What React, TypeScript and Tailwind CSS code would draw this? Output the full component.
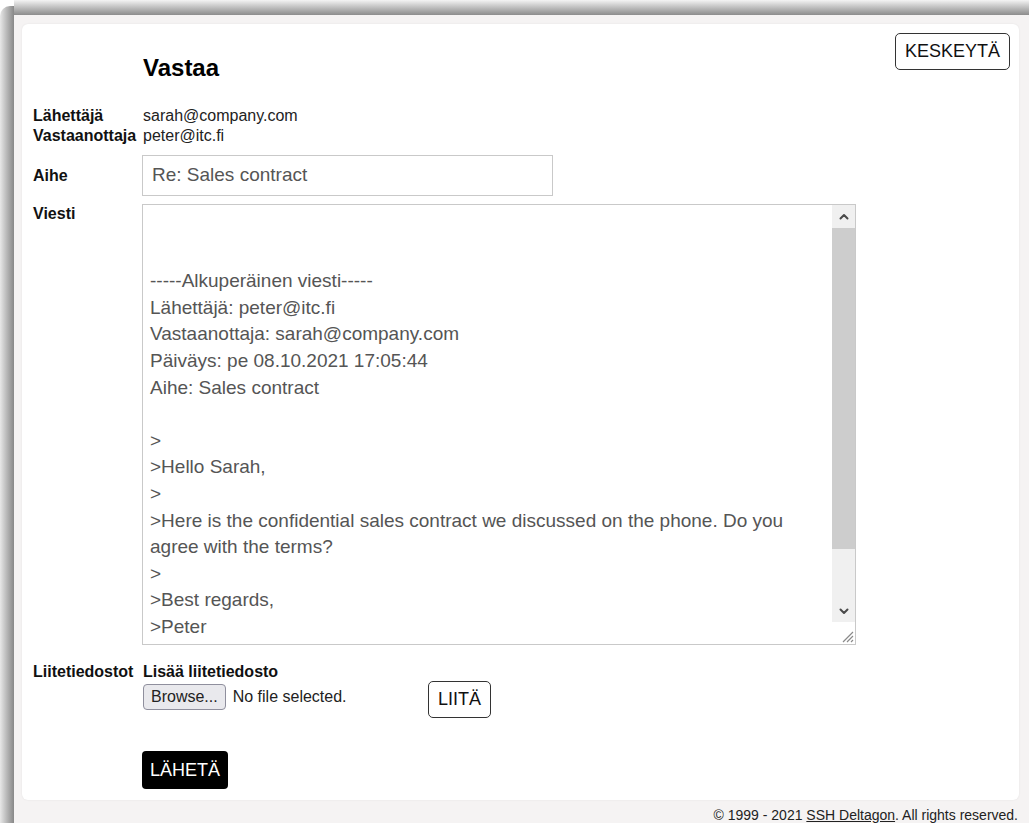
import type { ReactNode } from "react";

// Quoted original message shown in the reply body
const bodyLines = [
  "",
  "",
  "-----Alkuperäinen viesti-----",
  "Lähettäjä: peter@itc.fi",
  "Vastaanottaja: sarah@company.com",
  "Päiväys: pe 08.10.2021 17:05:44",
  "Aihe: Sales contract",
  "",
  ">",
  ">Hello Sarah,",
  ">",
  ">Here is the confidential sales contract we discussed on the phone. Do you",
  "agree with the terms?",
  ">",
  ">Best regards,",
  ">Peter",
];

const Label = ({ children }: { children: ReactNode }) => (
  <div className="w-[110px] shrink-0 text-[16px] leading-[19px] font-bold text-[#111]">{children}</div>
);

const Chevron = ({ up }: { up?: boolean }) => (
  <svg width="10" height="7" viewBox="0 0 10 7" fill="none">
    <path
      d={up ? "M1.5 5.5 L5 2 L8.5 5.5" : "M1.5 1.5 L5 5 L8.5 1.5"}
      stroke="#4a4a4a"
      strokeWidth="2"
      strokeLinecap="round"
      strokeLinejoin="round"
    />
  </svg>
);

// Textarea look-alike with its scrollbar scrolled to the top
const MessageBox = () => (
  <div className="-ml-px flex h-[441px] w-[714px] border border-[#c9c9c9] bg-white">
    <div className="flex-1 overflow-hidden pt-[10px] pl-[7px] text-[19px] leading-[26.6px] text-[#555]">
      {bodyLines.map((line, i) => (
        <div key={i} className="h-[26.6px] whitespace-pre">
          {line}
        </div>
      ))}
    </div>
    <div className="flex w-[23px] shrink-0 flex-col">
      <div className="flex h-[23px] items-center justify-center bg-[#f0f0f0]">
        <Chevron up />
      </div>
      <div className="h-[321px] bg-[#cdcdcd]" />
      <div className="flex flex-1 flex-col justify-end bg-[#f0f0f0]">
        <div className="flex h-[22px] items-center justify-center">
          <Chevron />
        </div>
      </div>
      <div className="flex h-[22px] items-end justify-end bg-white pr-[1px] pb-[1px]">
        <svg width="13" height="13" viewBox="0 0 13 13">
          <path d="M12 2 L2 12 M12 6 L6 12 M12 10 L10 12" stroke="#8a8a8a" strokeWidth="1.2" />
        </svg>
      </div>
    </div>
  </div>
);

export default function App() {
  return (
    <div className="flex h-[823px] overflow-hidden bg-white font-['Liberation_Sans',Arial,sans-serif]">
      {/* window shadow on the left edge */}
      <div className="mt-[6px] w-[14px] shrink-0 rounded-tl-[10px] bg-linear-to-r from-[#e8e8e8] to-[#888]" />
      <div className="flex flex-1 flex-col">
        {/* window shadow on the top edge */}
        <div className="h-[15px] shrink-0 bg-linear-to-b from-[#f4f4f4] to-[#8c8c8c]" />
        <div className="flex flex-1 flex-col bg-[#f5f3f3]">
          <div className="mt-[9px] mr-[10px] ml-[8px] rounded-[6px] bg-white pt-[9px] pr-[9px] pb-[11px] pl-[11px] shadow-[0_0_2px_rgba(0,0,0,0.08)]">
            <div className="flex items-start">
              <h1 className="mt-[21px] ml-[110px] text-[24px] leading-[28px] font-bold text-black">Vastaa</h1>
              <button className="ml-auto h-[37px] rounded-[5px] border border-[#333] bg-white px-[9px] text-[18px] text-[#111]">
                KESKEYTÄ
              </button>
            </div>

            <div className="mt-[24px] flex text-[16px] leading-[19px] text-[#222]">
              <Label>Lähettäjä</Label>
              <div>sarah@company.com</div>
            </div>
            <div className="mt-[1px] flex text-[16px] leading-[19px] text-[#222]">
              <Label>Vastaanottaja</Label>
              <div>peter@itc.fi</div>
            </div>

            <div className="mt-[10px] flex items-center">
              <Label>Aihe</Label>
              <div className="-ml-px flex h-[41px] w-[411px] items-center border border-[#c9c9c9] px-[9px] text-[19px] text-[#555]">
                Re: Sales contract
              </div>
            </div>

            <div className="mt-[8px] flex items-start">
              <Label>Viesti</Label>
              <MessageBox />
            </div>

            <div className="mt-[17px] flex items-start">
              <Label>Liitetiedostot</Label>
              <div className="flex flex-col">
                <div className="text-[16px] leading-[19px] font-bold text-[#111]">Lisää liitetiedosto</div>
                <div className="flex items-start">
                  <div className="mt-[3px] flex w-[285px] items-center gap-[7px]">
                    <button className="h-[26px] rounded-[4px] border border-[#8f8f9d] bg-[#e9e9ed] px-[7px] text-[16px] text-[#222]">
                      Browse...
                    </button>
                    <span className="text-[16px] text-[#222]">No file selected.</span>
                  </div>
                  <button className="h-[37px] rounded-[5px] border border-[#333] bg-white px-[9px] text-[18px] text-[#111]">
                    LIITÄ
                  </button>
                </div>
              </div>
            </div>

            <div className="mt-[33px] flex">
              <div className="w-[109px] shrink-0" />
              <button className="h-[38px] rounded-[4px] bg-black px-[8px] text-[18px] text-white">LÄHETÄ</button>
            </div>
          </div>

          <div className="pt-[5px] pr-[11px] text-right text-[14px] leading-[20px] text-[#222]">
            © 1999 - 2021 <span className="underline">SSH Deltagon</span>. All rights reserved.
          </div>
        </div>
      </div>
    </div>
  );
}
